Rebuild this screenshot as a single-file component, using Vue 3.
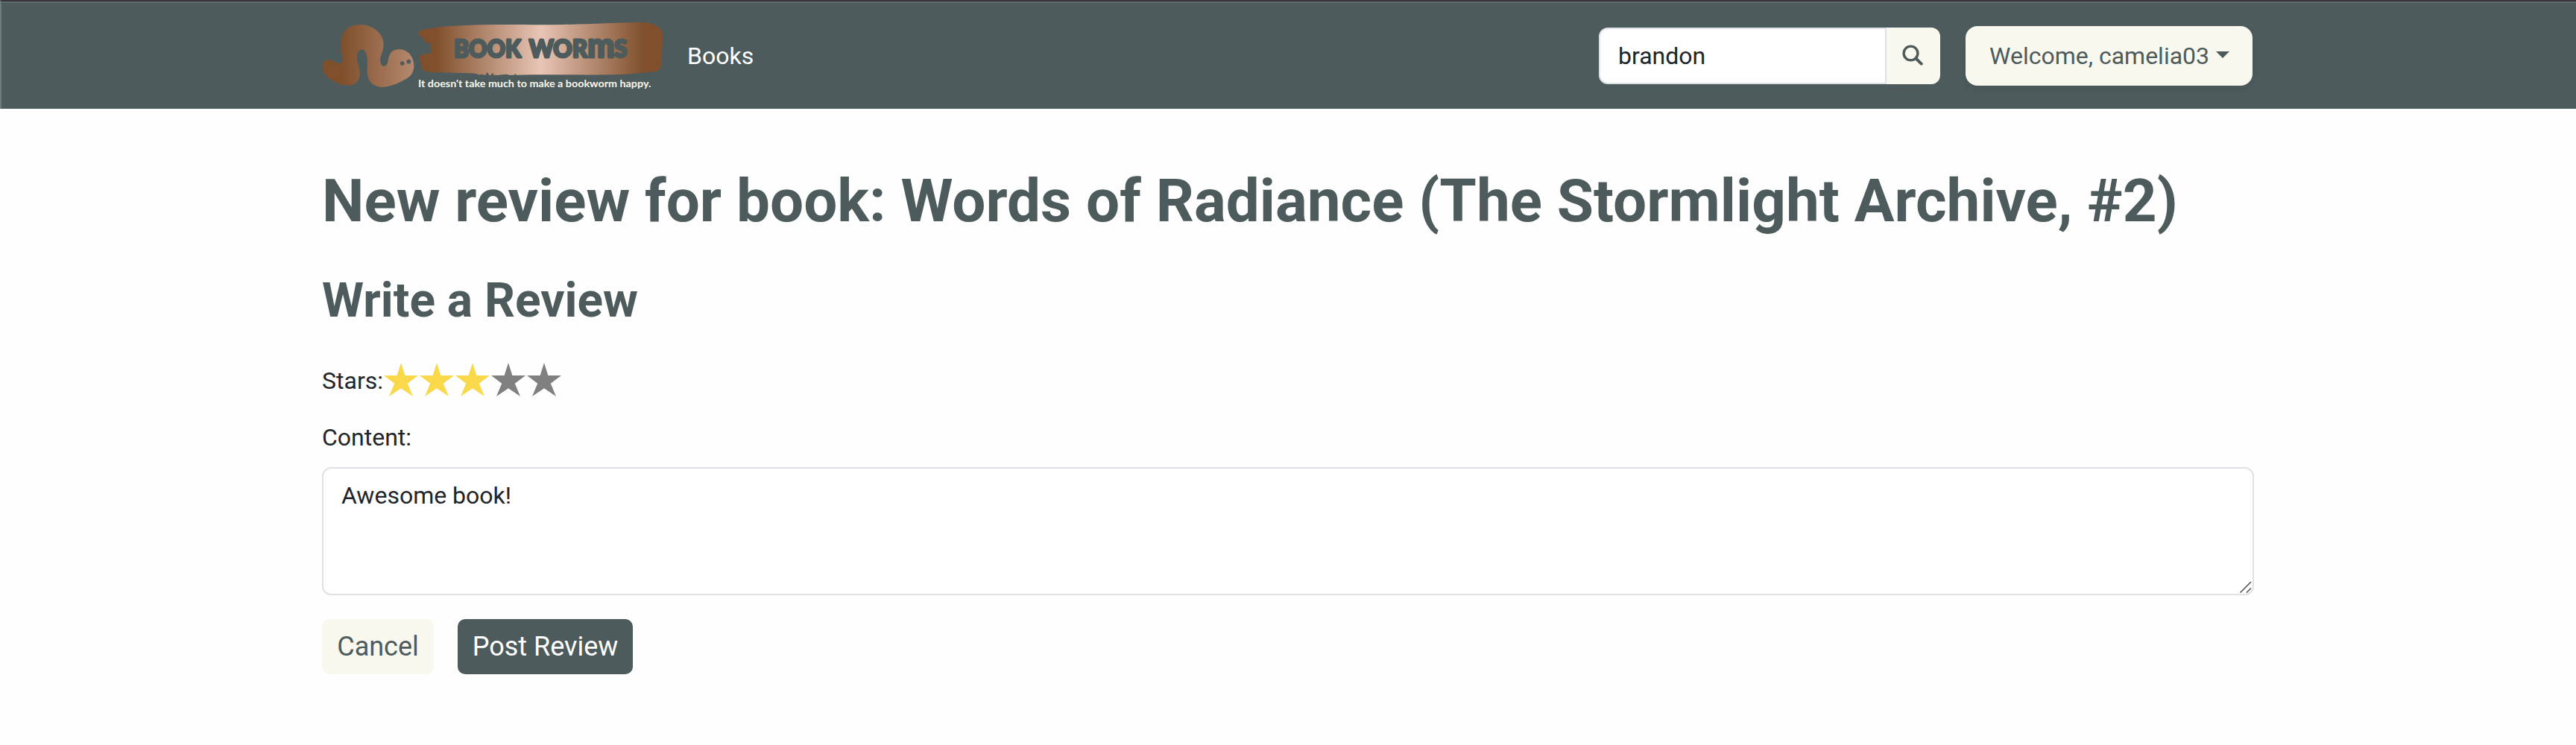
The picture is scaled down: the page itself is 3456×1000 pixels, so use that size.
<script setup>
import { ref } from 'vue'

const search = ref('brandon')
const content = ref('Awesome book!')
const rating = ref(3)
</script>

<template>
  <div class="page">
    <header class="navbar">
      <div class="container nav-row">
        <a class="brand" aria-label="Book Worms">
          <svg class="logo" viewBox="36 81 1380 288">
            <defs>
              <linearGradient id="worm" x1="0" x2="1">
                <stop offset="0" stop-color="#80502c" />
                <stop offset="0.22" stop-color="#80502c" />
                <stop offset="1" stop-color="#b5896f" />
              </linearGradient>
              <linearGradient id="banner" x1="0" x2="1">
                <stop offset="0" stop-color="#80502c" />
                <stop offset="0.07" stop-color="#80502c" />
                <stop offset="0.5" stop-color="#e9c5b6" />
                <stop offset="0.92" stop-color="#80502c" />
                <stop offset="1" stop-color="#80502c" />
              </linearGradient>
            </defs>
            <path fill="url(#worm)" d="M38 268C38 247 53 238 69 241C84 244 91 256 105 255C119 254 121 243 118 229C112 202 109 174 115 151C124 116 153 99 190 99C236 99 273 128 282 163C287 185 281 205 273 225C268 239 270 254 276 262C284 270 294 268 299 256C303 245 302 229 311 215C320 201 337 197 354 199C385 204 405 230 406 263C407 294 391 311 365 323C330 342 299 351 271 350C242 348 224 329 219 301C216 282 220 258 218 238C216 213 208 199 196 199C183 199 175 215 176 235C177 254 188 270 188 295C188 321 178 337 154 343C128 348 96 337 74 322C51 308 38 291 38 268Z" />
            <circle cx="359" cy="255" r="8.5" fill="#4e5b5c" />
            <circle cx="385" cy="248" r="8.5" fill="#4e5b5c" />
            <path fill="url(#banner)" d="M426 129C431 119 455 117 478 113C530 106 600 102 680 100C800 98 900 101 1010 99C1120 97 1220 91 1325 90C1354 90 1372 98 1390 109C1401 116 1407 126 1407 143C1407 180 1404 220 1402 250C1400 277 1392 288 1376 289C1330 291 1290 299 1235 300C1080 303 940 299 820 302L814 298L808 302H790L780 299L758 301L744 303L728 302L722 293L716 302L710 304L700 290L694 303L680 299L665 301L655 296C600 294 545 293 500 292C473 292 445 288 438 277C436 270 440 262 434 254C428 244 424 235 431 226C445 212 470 220 478 208C477 200 469 194 474 187C480 180 473 175 463 174C449 170 450 158 438 149C428 143 423 138 426 129Z" />
            <g class="logo-name">
              <text x="567" y="231" textLength="270" lengthAdjust="spacingAndGlyphs">BOOK</text>
              <text x="869" y="231" textLength="396" lengthAdjust="spacingAndGlyphs">WOR<tspan class="big-m">m</tspan>S</text>
            </g>
            <text class="tagline" x="423" y="352" textLength="937" lengthAdjust="spacingAndGlyphs">It doesn't take much to make a bookworm happy.</text>
          </svg>
        </a>
        <a class="nav-link">Books</a>
        <form class="search" @submit.prevent>
          <input v-model="search" type="text" aria-label="Search" />
          <button type="submit" aria-label="Submit search">
            <svg width="28" height="28" viewBox="0 0 28 28" fill="none" stroke="#4e5b5c">
              <circle cx="11.5" cy="11.5" r="9.4" stroke-width="3.4" />
              <path d="M18.5 18.5L25.7 25.7" stroke-width="4" stroke-linecap="round" />
            </svg>
          </button>
        </form>
        <button class="user-menu">Welcome, camelia03<span class="caret"></span></button>
      </div>
    </header>

    <main class="container">
      <h1>New review for book: Words of Radiance (The Stormlight Archive, #2)</h1>
      <h2>Write a Review</h2>
      <form @submit.prevent>
        <div class="stars-row">
          <span class="label">Stars:</span>
          <svg
            v-for="n in 5"
            :key="n"
            class="star"
            :class="{ on: n <= rating }"
            viewBox="0 0 48 48"
            @click="rating = n"
          >
            <path d="M24 0L29.4 17H47L32.8 27.7L40 45L24 34.2L8 45L15.2 27.7L1 17H18.6Z" />
          </svg>
        </div>
        <label class="content-label" for="content">Content:</label>
        <div class="field">
          <textarea id="content" v-model="content"></textarea>
          <svg class="grip" width="18" height="18" viewBox="0 0 18 18" stroke="#555" stroke-width="1.6">
            <path d="M1.5 16.5L16 2M10 16.5L16 10.5" />
          </svg>
        </div>
        <div class="actions">
          <button type="button" class="btn cancel">Cancel</button>
          <button type="submit" class="btn post">Post Review</button>
        </div>
      </form>
    </main>
  </div>
</template>

<style>
body {
  margin: 0;
  background: #fff;
}
</style>

<style scoped>
.page,
.page * {
  box-sizing: border-box;
}
.page {
  height: 1000px;
  overflow: hidden;
  background: #fefefe;
  color: #212529;
  font: 32px/48px Roboto, sans-serif;
}
button,
input,
textarea {
  font: inherit;
  color: inherit;
  margin: 0;
  outline: none;
}
.container {
  width: 2592px;
  margin: 0 auto;
}
.navbar {
  height: 146px;
  background: #4e5b5c;
  border-top: 2px solid #35353b;
  border-left: 2px solid #6d7b7b;
  box-shadow: inset 0 2px #606969;
}
.nav-row {
  height: 144px;
  padding-top: 2px;
  display: flex;
  align-items: center;
  position: relative;
  left: -1px;
}
.brand {
  display: flex;
}
.logo {
  width: 460px;
  height: 96px;
}
.logo-name {
  font: 900 98px Lato, sans-serif;
  fill: #4e5b5c;
  stroke: #4e5b5c;
  stroke-width: 9px;
  stroke-linejoin: round;
}
.big-m {
  font-size: 134px;
}
.tagline {
  font: 700 41px Lato, sans-serif;
  fill: #f8f8ee;
}
.nav-link {
  margin-left: 30px;
  color: #fff;
}
.search {
  display: flex;
  width: 458px;
  height: 76px;
  margin-left: auto;
}
.search input {
  width: 386px;
  padding: 0 24px;
  color: #212529;
  background: #fff;
  border: 2px solid #dee2e6;
  border-radius: 12px 0 0 12px;
}
.search button {
  width: 72px;
  display: flex;
  align-items: center;
  justify-content: center;
  padding: 0 2px 2px 0;
  background: #f8f8ee;
  border: 0;
  border-radius: 0 12px 12px 0;
}
.user-menu {
  display: flex;
  align-items: center;
  width: 385px;
  height: 80px;
  margin: 0 2px 0 34px;
  padding: 0 32px;
  color: #4e5b5c;
  background: #f8f8ee;
  border: 0;
  border-radius: 16px;
  box-shadow: 0 4px 8px rgba(0, 0, 0, 0.08);
  white-space: nowrap;
}
.caret {
  margin: -4px 0 0 9px;
  border: 9px solid transparent;
  border-top-color: #4e5b5c;
  border-bottom: 0;
}
h1,
h2 {
  margin: 0;
  color: #4e5b5c;
  font-weight: 700;
  white-space: nowrap;
}
h1 {
  padding-top: 76px;
  font-size: 80px;
  line-height: 96px;
}
h2 {
  margin: 47px 0 45px;
  font-size: 64px;
  line-height: 77px;
}
.stars-row {
  display: flex;
  height: 48px;
}
.label {
  width: 82px;
}
.star {
  width: 48px;
  height: 48px;
  fill: #808080;
}
.star.on {
  fill: #f9d949;
}
.content-label {
  display: block;
  margin: 28px 0 16px;
}
.field {
  position: relative;
  height: 172px;
}
textarea {
  display: block;
  width: 100%;
  height: 172px;
  padding: 12px 24px;
  background: #fff;
  border: 2px solid #dee2e6;
  border-radius: 12px;
  resize: none;
}
.grip {
  position: absolute;
  right: 2px;
  bottom: 2px;
}
.actions {
  display: flex;
  gap: 32px;
  margin-top: 32px;
}
.btn {
  height: 74px;
  padding: 0;
  font-size: 36px;
  border: 0;
  border-radius: 10px;
}
.cancel {
  width: 150px;
  color: #4e5b5c;
  background: #f8f8ee;
}
.post {
  width: 235px;
  color: #fff;
  background: #4e5b5c;
}
</style>
